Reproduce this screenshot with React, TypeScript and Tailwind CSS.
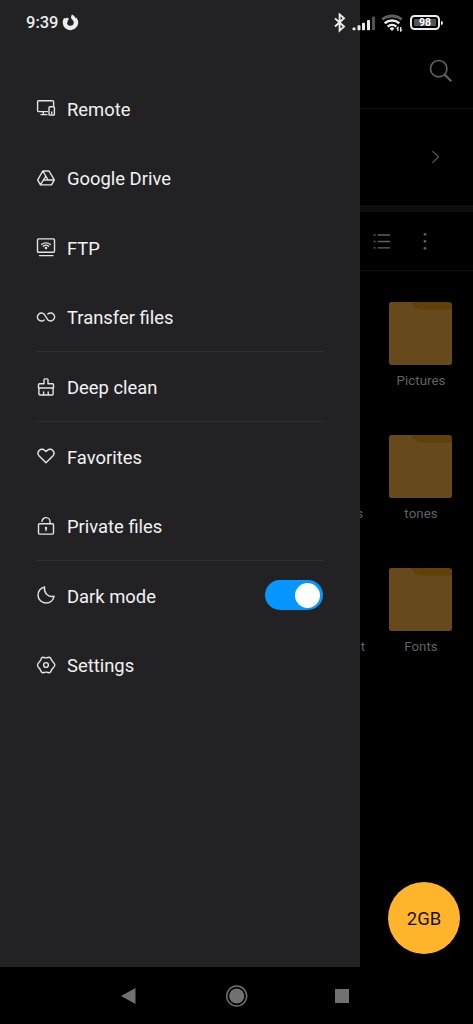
import type { ReactNode } from 'react';

type MenuItem = {
  label: string;
  icon: ReactNode;
  divider?: boolean;
  toggle?: boolean;
};

const menu: MenuItem[] = [
  {
    label: 'Remote',
    icon: (
      <>
        <path d="M11.5 13.6H2.6a1 1 0 0 1-1-1V3.7a1 1 0 0 1 1-1h14a1 1 0 0 1 1 1v4" />
        <path d="M5 16.6h6M7.3 13.8v2.6" />
        <rect x="13" y="8.8" width="5.4" height="8.2" rx="0.8" />
        <path d="M15.7 14v1.4" />
      </>
    ),
  },
  {
    label: 'Google Drive',
    icon: (
      <path d="M6.8 3h6.2l5.3 8.8-2.7 5.1H4.4l-2.7-5.1zM6.8 3l5.4 9M9.900 8 4.400 16.900M7.400 12h10.800" />
    ),
  },
  {
    label: 'FTP',
    icon: (
      <>
        <rect x="1.5" y="1.9" width="17" height="13.4" rx="1" />
        <path d="M3.5 18.6h13.4" />
        <path d="M5.7 7.500a6.4 6.4 0 0 1 8.6 0M7.4 9.3a3.9 3.9 0 0 1 5.2 0" />
        <circle cx="10" cy="11" r="0.6" />
      </>
    ),
  },
  {
    label: 'Transfer files',
    divider: true,
    icon: (
      <path d="M8.2 12.9A4 4 0 1 1 8.3 7.3L11.7 12.7A4 4 0 1 0 11.8 7.1" />
    ),
  },
  {
    label: 'Deep clean',
    divider: true,
    icon: (
      <path d="M2.5 11V7.8a1 1 0 0 1 1-1H8V2.700a.8.8 0 0 1 .8-.8h2.400a.8.8 0 0 1 .8.8v4.100h4.500a1 1 0 0 1 1 1V11zM2.9 11v6a1 1 0 0 0 1 1h12.200a1 1 0 0 0 1-1v-6M7.600 15v3M12.200 15v3" />
    ),
  },
  {
    label: 'Favorites',
    icon: (
      <path d="M10 16.800 3.200 9.900a4 4 0 0 1 0-5.500 3.900 3.900 0 0 1 5.600 0L10 5.600l1.200-1.200a3.900 3.900 0 0 1 5.600 0 4 4 0 0 1 0 5.500z" />
    ),
  },
  {
    label: 'Private files',
    divider: true,
    icon: (
      <>
        <rect x="2.5" y="7.8" width="15" height="10.3" rx="1" />
        <path d="M6 5.4a4 4 0 0 1 8 .5v1.900M10 12v2.600" />
        <circle cx="10" cy="12" r="0.5" />
      </>
    ),
  },
  {
    label: 'Dark mode',
    toggle: true,
    icon: (
      <path d="M8.6 2a8.1 8.1 0 1 0 9.5 9.1c-4.8 1.8-10.4-2.3-9.5-9.1z" />
    ),
  },
  {
    label: 'Settings',
    icon: (
      <>
        <path d="M5.500 2.900Q6.500 1.900 8 2.500q2 .8 4 0q1.500-.6 2.500.4l1 1.900q.6 1.600 1.900 2.600q1.600 1.500 1.300 2.600q.3 1.100-1.300 2.600q-1.300 1-1.900 2.600l-1 1.900q-1 1-2.500.4q-2-.8-4 0q-1.500.6-2.500-.4l-1-1.900q-.6-1.600-1.900-2.600Q1.300 11.100 1.600 10q-.3-1.100 1.300-2.600q1.300-1 1.900-2.600z" />
        <circle cx="10" cy="10" r="2.4" />
      </>
    ),
  },
];

const folders = [
  { name: 'Pictures', neighbour: '' },
  { name: 'tones', neighbour: 's' },
  { name: 'Fonts', neighbour: 't' },
];

function StatusBar() {
  return (
    <div className="absolute inset-x-0 top-0 flex h-[45px] items-center justify-between pl-[26px] pr-[30px] text-[#ececec]">
      <div className="flex items-center gap-[4px]">
        <span className="pt-[2px] text-[16.5px] font-medium leading-none">9:39</span>
        <svg width="17" height="18" viewBox="0 0 17 18" fill="currentColor">
          <path d="M9.9.5c2 .9 3 2.200 3.500 3.500l.9-.5c1.400 1.800 2.200 3.800 1.900 6A7.800 7.800 0 0 1 .7 8.800C.7 6.900 1.300 5 2.300 3.800l.8 1c.8-.9 1.800-1.200 2.800-1.100L7 5.600l-1.500.7.5 1.300-1 .8c0 2.200 1.600 3.400 3.400 3.400 2 0 3.300-1.400 3.300-3.100 0-1.700-.8-2.500-1.800-3.400C8.900 4.300 8.700 2.400 9.900.5z" />
        </svg>
      </div>
      <div className="flex items-center">
        <svg width="110" height="20" viewBox="0 0 110 20" fill="none" stroke="currentColor">
          <path d="m3 5.400 9 8.200-4.400 4V1.400l4.400 3.900L3 13.500" strokeWidth="1.9" />
          <g fill="currentColor" stroke="none">
            <rect x="20.5" y="14.6" width="3" height="2.7" rx=".8" />
            <rect x="25.5" y="12.3" width="3" height="5" rx=".8" />
            <rect x="30" y="9.7" width="3" height="7.6" rx=".8" />
            <rect x="35" y="7" width="3" height="10.3" rx=".8" />
            <rect x="40" y="3.5" width="3" height="13.8" rx=".8" opacity=".35" />
          </g>
          <path d="M50.200 6.500a15.500 15.500 0 0 1 19.600 0" strokeWidth="2.8" opacity=".4" />
          <path d="M52.700 10.200a11.500 11.500 0 0 1 14.600 0M55.700 13.600a6.700 6.700 0 0 1 8.600 0" strokeWidth="2.5" />
          <path d="m60 18-2.400-2.600a3.500 3.500 0 0 1 4.800 0z" fill="currentColor" stroke="none" />
          <path d="M65.900 18v-3.500l-1.200 1.200M68.700 14v3.800l1.200-1.200" strokeWidth="1.3" />
        </svg>
        <div className="-ml-[32px] flex items-center gap-px">
          <div className="flex h-[15px] w-[30px] items-center justify-center rounded-[4.5px] border-2 border-current p-[2px]">
            <div className="flex h-full w-full items-center justify-center rounded-[1px] bg-[#555]">
              <span className="pt-[2px] text-[10.5px] font-bold leading-none text-white">98</span>
            </div>
          </div>
          <div className="h-[4px] w-[2px] rounded-r-sm bg-current" />
        </div>
      </div>
    </div>
  );
}

function Toggle() {
  return (
    <div className="ml-auto mr-px flex h-[30px] w-[58px] items-center justify-end rounded-full bg-[#0696ff] pr-[3px]">
      <div className="size-[25px] rounded-full bg-white" />
    </div>
  );
}

function Drawer() {
  return (
    <nav className="w-[360px] shrink-0 bg-[#222224] px-[36px] pt-[74px]">
      {menu.map((item) => (
        <div
          key={item.label}
          className={`flex h-[69.57px] items-center border-b ${item.divider ? 'border-[#2d2d2f]' : 'border-transparent'}`}
        >
          <svg
            width="20"
            height="20"
            viewBox="0 0 20 20"
            fill="none"
            stroke="#e4e4e4"
            strokeWidth="1.4"
            strokeLinecap="round"
            strokeLinejoin="round"
          >
            {item.icon}
          </svg>
          <span className="ml-[11px] pt-[3px] text-[18.4px] leading-6 text-[#f2f2f2]">{item.label}</span>
          {item.toggle && <Toggle />}
        </div>
      ))}
    </nav>
  );
}

function Folder({ name, neighbour }: { name: string; neighbour: string }) {
  return (
    <div className="relative h-[133px] pl-[29px]">
      <svg width="63" height="63" viewBox="0 0 63 63">
        <rect width="63" height="63" rx="3" fill="#614009" />
        <path d="M3 0h18l5.500 5.500Q28.500 7.500 31 7.500h32V60a3 3 0 0 1-3 3H3a3 3 0 0 1-3-3V3a3 3 0 0 1 3-3z" fill="#664a1d" />
      </svg>
      <div className="mt-[6.5px] w-[64px] text-center text-[13.2px] leading-[18px] tracking-[0.1px] text-[#626262]">{name}</div>
      {neighbour && (
        <span className="absolute left-0 top-[69.5px] flex w-[5px] justify-end overflow-hidden text-[13.2px] leading-[18px] text-[#626262]">
          <span className={neighbour === 's' ? 'mr-[2px]' : ''}>{neighbour}</span>
        </span>
      )}
    </div>
  );
}

function FilesPane() {
  return (
    <main className="relative flex flex-1 flex-col bg-black text-[#606060]">
      <div className="flex h-[109px] items-end justify-end border-b border-[#0f0f0f] pb-[25px] pr-[20px]">
        <svg width="24" height="24" viewBox="0 0 24 24" fill="none" stroke="currentColor" strokeWidth="1.7">
          <circle cx="9.7" cy="9.7" r="8.2" />
          <path d="m15.600 15.600 6.700 6.700" strokeWidth="2.2" />
        </svg>
      </div>
      <div className="flex h-[96px] items-center justify-end pr-[33px]">
        <svg width="9" height="14" viewBox="0 0 9 14" fill="none" stroke="currentColor" strokeWidth="1.1">
          <path d="m1.500 1.200 6 5.800-6 5.800" />
        </svg>
      </div>
      <div className="h-[7px] bg-[#0d0d0d]" />
      <div className="flex h-[59px] items-center border-b border-[#0f0f0f] pl-[13px]">
        <svg width="18" height="16" viewBox="0 0 18 16" fill="none" stroke="currentColor" strokeWidth="1.3">
          <path d="M4.500 2H17M4.500 8.500H17M4.500 14.800H17M.5 2h2M.5 8.500h2M.5 14.800h2" />
        </svg>
        <svg className="ml-[32px]" width="4" height="18" viewBox="0 0 4 18" fill="currentColor">
          <circle cx="2" cy="2.300" r="1.4" />
          <circle cx="2" cy="9.300" r="1.4" />
          <circle cx="2" cy="16.300" r="1.4" />
        </svg>
      </div>
      <div className="pt-[31.4px]">
        {folders.map((folder) => (
          <Folder key={folder.name} {...folder} />
        ))}
      </div>
      <button className="absolute bottom-[13px] right-[13px] size-[72px] rounded-full bg-[#ffb42c] pt-[2px] text-[18.4px] text-[#17120a]">
        2GB
      </button>
    </main>
  );
}

function NavigationBar() {
  return (
    <div className="h-[57px] bg-black text-[#717171]">
      <svg width="473" height="57" viewBox="0 0 473 57" fill="currentColor">
        <path d="M121 29 135.500 21v16z" />
        <circle cx="236.7" cy="29" r="7.6" />
        <circle cx="236.7" cy="29" r="10" fill="none" stroke="currentColor" strokeWidth="1.5" />
        <rect x="335" y="22" width="14" height="14" />
      </svg>
    </div>
  );
}

export default function App() {
  return (
    <div className="relative flex h-[1024px] w-[473px] flex-col overflow-hidden bg-black font-['Roboto',sans-serif]">
      <div className="flex flex-1">
        <Drawer />
        <FilesPane />
      </div>
      <NavigationBar />
      <StatusBar />
    </div>
  );
}
